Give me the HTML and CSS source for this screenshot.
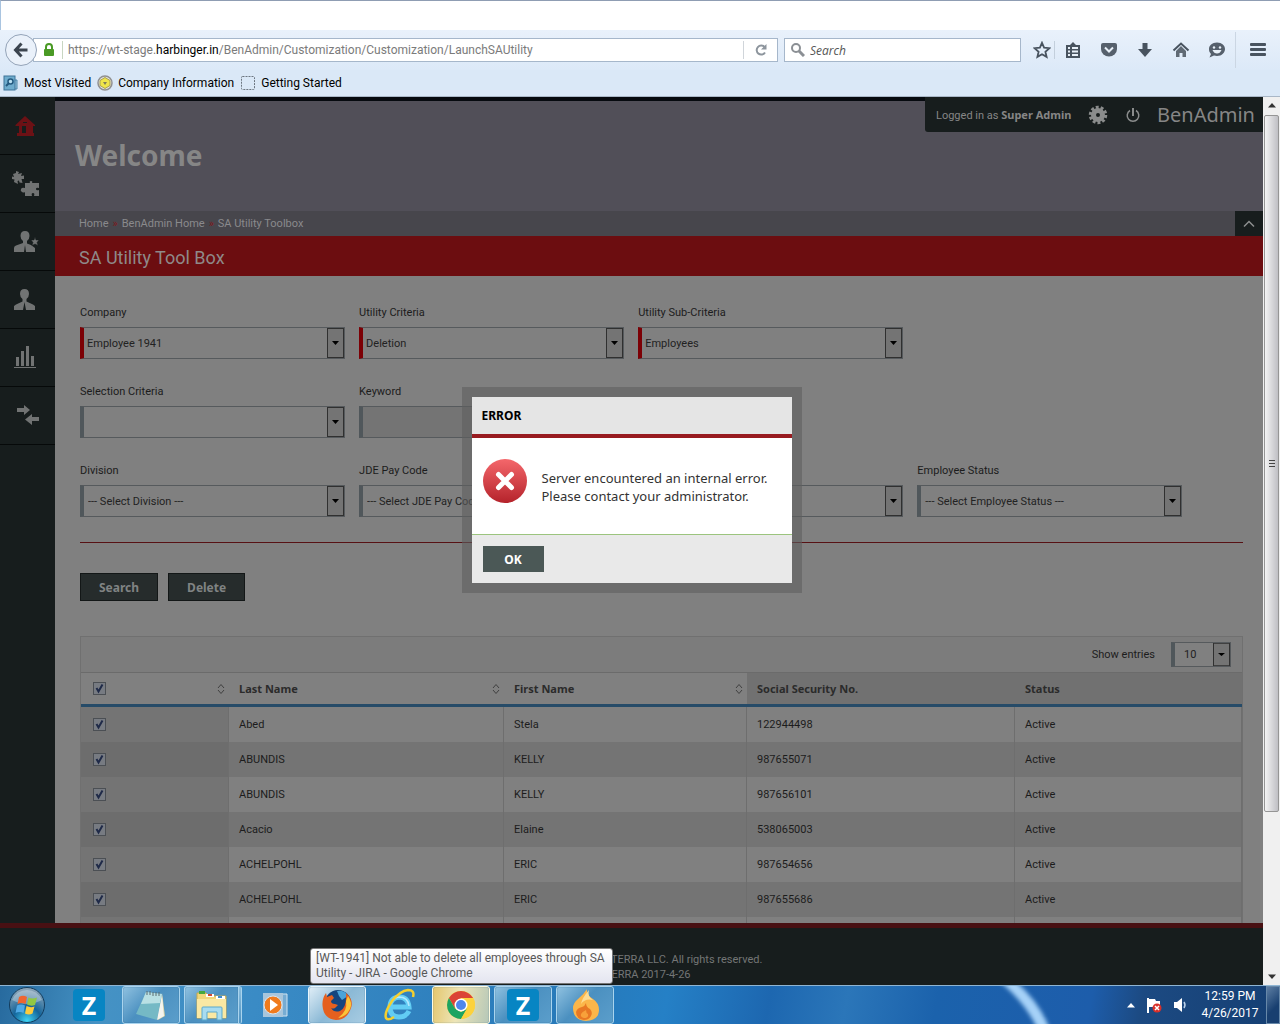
FILE: index.html
```html
<!DOCTYPE html>
<html lang="en">
<head>
    <meta charset="UTF-8">
    <meta name="viewport" content="width=device-width, initial-scale=1.0">
    <title>BenAdmin - SA Utility Tool Box</title>
    <link rel="stylesheet" href="styles.css">
</head>
<body>
    <!-- Browser chrome -->
    <div class="title-strip"></div>
    <div class="nav-bar">
        <button class="back-button" aria-label="Back">
            <svg width="16" height="16" viewBox="0 0 16 16" fill="none" stroke="#3c454f" stroke-width="3"><path d="M14.500 8H3M8.500 1.500L2.500 8l6 6.500"/></svg>
        </button>
        <div class="url-bar">
            <svg class="lock" width="12" height="14" viewBox="0 0 12 14"><path d="M3 7V4a3 3 0 0 1 6 0v3" fill="none" stroke="#4a9a25" stroke-width="2"/><rect x="1" y="6" width="10" height="7" rx="1" fill="#4a9a25"/></svg>
            <div class="url-text">https://wt-stage.<b>harbinger.in</b>/BenAdmin/Customization/Customization/LaunchSAUtility</div>
            <button class="reload" aria-label="Reload">
                <svg width="14" height="14" viewBox="0 0 14 14"><path d="M11 9.500a4.500 4.500 0 1 1-.5-5.500" fill="none" stroke="#8d959d" stroke-width="2"/><path d="M12.500 1v5.500H7z" fill="#8d959d"/></svg>
            </button>
        </div>
        <div class="search-bar">
            <svg width="14" height="14" viewBox="0 0 14 14" fill="none" stroke="#8b8f94"><circle cx="5" cy="5" r="4" stroke-width="2"/><path d="M8 8l5 5" stroke-width="3"/></svg>
            <input class="search-input" type="text" placeholder="Search" aria-label="Search the web">
        </div>
        <div class="nav-icons">
            <button class="star" aria-label="Bookmark this page"><svg width="18" height="18" viewBox="0 0 18 18" fill="none" stroke="#48535f" stroke-width="1.800"><path d="M9 1.800l2.100 4.900 5.300.5-4 3.500 1.200 5.200L9 13.200l-4.600 2.700 1.200-5.200-4-3.500 5.300-.5z"/></svg></button>
            <button aria-label="Bookmarks"><svg width="18" height="18" viewBox="0 0 18 18"><path d="M2 4h4l3-3 3 3h4v13H2z" fill="#48535f"/><path d="M4 6h2v2H4zM8 6h6v2H8zM4 9.500h2v2H4zM8 9.500h6v2H8zM4 13h2v2H4zM8 13h6v2H8z" fill="#e8f0f8"/></svg></button>
            <button aria-label="Pocket"><svg width="18" height="18" viewBox="0 0 18 18"><path d="M1 4q0-2 2-2h12q2 0 2 2v4a8 7.500 0 0 1-16 0z" fill="#56606c"/><path d="M5 6.500l4 4 4-4" fill="none" stroke="#e8f0f8" stroke-width="2"/></svg></button>
            <button aria-label="Downloads"><svg width="18" height="18" viewBox="0 0 18 18"><path d="M6.500 2h5v6H16l-7 8-7-8h4.500z" fill="#48535f"/></svg></button>
            <button aria-label="Home"><svg width="18" height="18" viewBox="0 0 18 18"><path d="M1.500 9.500L9 2.500l7.500 7" fill="none" stroke="#48535f" stroke-width="2"/><path d="M4 10l5-5 5 5v6h-3.500v-4h-3v4H4z" fill="#606a75"/></svg></button>
            <button aria-label="Hello"><svg width="18" height="18" viewBox="0 0 18 18"><path d="M9 1.500c5 0 8 3 8 6.500s-3 7-8 7c-1 0-2-.1-3-.4L1.500 16.500 3 13C1.500 11.500 1 10 1 8c0-3.500 3-6.500 8-6.500z" fill="#56606c"/><circle cx="6" cy="6.500" r="1.200" fill="#e8f0f8"/><circle cx="12" cy="6.500" r="1.200" fill="#e8f0f8"/><path d="M4.500 9h9q-1.500 3.500-4.500 3.500T4.500 9z" fill="#e8f0f8"/></svg></button>
            <button class="menu" aria-label="Open menu"><svg width="18" height="18" viewBox="0 0 18 18" fill="#48535f"><rect x="1" y="2" width="16" height="3" rx="1"/><rect x="1" y="7" width="16" height="3" rx="1"/><rect x="1" y="12" width="16" height="3" rx="1"/></svg></button>
        </div>
    </div>
    <div class="bookmark-bar">
        <a href="#"><svg width="16" height="16" viewBox="0 0 16 16"><path d="M12 5h2v9h-3" fill="#9cc8e0" stroke="#4d86a8"/><rect x="1" y="1" width="11" height="14" fill="#6eaccd" stroke="#3c7398"/><circle cx="7.500" cy="6.500" r="2.500" fill="#b9e0f2" stroke="#245a80" stroke-width="1.500"/><path d="M5.500 8.500L3 11" stroke="#245a80" stroke-width="2"/></svg>Most Visited</a>
        <a href="#"><svg width="16" height="16" viewBox="0 0 16 16"><circle cx="8" cy="8" r="7" fill="#e6e6e6" stroke="#909090" stroke-width="1.500"/><path d="M8 2.500l5 3v5l-5 3-5-3v-5z" fill="#efe54a" stroke="#aaa14e"/><path d="M6 7h4l-2 3z" fill="#7d7d5a"/></svg>Company Information</a>
        <a href="#"><svg width="16" height="16" viewBox="0 0 16 16"><rect x="1.500" y="1.500" width="13" height="13" rx="1" fill="none" stroke="#6c7680" stroke-dasharray="2 1"/></svg>Getting Started</a>
    </div>

    <div class="viewport">
        <div class="page">
            <div class="page-body">
                <!-- Left menu -->
                <nav class="sidebar">
                    <a href="#" aria-label="Home"><svg width="28" height="28" viewBox="0 0 28 28" fill="#6c1115"><path d="M3.500 13L13 4l10 9v1h-2v7h1v3H5v-3h2v-7H3.500zM10 14v7h4v-7zM11 11h4v-1h-4z" fill-rule="evenodd"/></svg></a>
                    <a href="#" aria-label="Modules"><svg width="28" height="28" viewBox="0 0 28 28" fill="#717373"><path d="M1 4l3-1V1l3 1-1 2 4-1-1 3 3-.5V9L9.500 9l1 4-3-.5-.5-2-1.500.5.5 3-4-2 .5-2.500L0 9V6.500l2 .5z"/><path d="M13 13h5q-1-2 1-2t1 2h7v5q-3-1-3 1t3 1v6h-5q1-3-1-3t-1 3h-7v-4q-1 1-3 0t-1-3 4-1z"/></svg></a>
                    <a href="#" aria-label="Admins"><svg width="28" height="28" viewBox="0 0 28 28" fill="#717373"><path d="M13 3q4.500 0 4.500 5 0 3-2.500 5v2.500l4 1.500 4 3v4H2v-4q0-2 2-2.500l7-2.500V13q-2.500-2-2.500-5 0-5 4.500-5z"/><path d="M13 17l1 7h-2z" fill="#171d1d"/><path d="M23 9l1 3h3l-2 2.500 1 3-3-1.500-3 1.500 1-3-2-2.500h3z" stroke="#171d1d" stroke-width=".5"/></svg></a>
                    <a href="#" aria-label="Employees"><svg width="28" height="28" viewBox="0 0 28 28" fill="#717373"><path d="M12.500 3Q17 3 17 8q0 3-2.500 5v2.500l6.500 3 2 1.500v4H2v-4l2-1.500 6.500-3V13Q8 11 8 8q0-5 4.500-5z"/><path d="M12.500 16l1.500 8h-3z" fill="#171d1d"/></svg></a>
                    <a href="#" aria-label="Reports"><svg width="28" height="28" viewBox="0 0 28 28" fill="#717373"><path d="M4 13h3v9H4zM9 7h3v15H9zM14 2h3v20h-3zM19 12h3v10h-3zM2 23h22v1H2z"/></svg></a>
                    <a href="#" aria-label="Transfers"><svg width="28" height="28" viewBox="0 0 28 28" fill="#717373"><path d="M5 6h7V3l6 5-6 5v-3H5zM27 15h-7v-3l-7 5.500 7 5.500v-4h7z"/></svg></a>
                </nav>

                <main class="main">
                    <header class="banner">
                        <h1>Welcome</h1>
                        <div class="user-box">
                            <span class="logged-in">Logged in as <b>Super Admin</b></span>
                            <svg width="20" height="20" viewBox="0 0 20 20"><circle cx="10" cy="10" r="4.500" fill="none" stroke="#8a8c8c" stroke-width="5"/><circle cx="10" cy="10" r="7.500" fill="none" stroke="#8a8c8c" stroke-width="3.500" stroke-dasharray="2.800 1.912"/></svg>
                            <svg width="16" height="16" viewBox="0 0 16 16" fill="none" stroke="#8a8c8c" stroke-width="1.500"><path d="M5 3.500a5.800 5.800 0 1 0 6 0"/><path d="M8 1v8" stroke-width="2"/></svg>
                            <span class="brand">BenAdmin</span>
                        </div>
                    </header>
                    <div class="crumbs">
                        <a href="#">Home</a><i>»</i><a href="#">BenAdmin Home</a><i>»</i><a href="#">SA Utility Toolbox</a>
                        <button class="collapse" aria-label="Collapse header"><svg width="12" height="8" viewBox="0 0 12 8" fill="none" stroke="#8c8e8e" stroke-width="1.500"><path d="M1 6.500l5-5 5 5"/></svg></button>
                    </div>
                    <h2 class="page-title">SA Utility Tool Box</h2>

                    <div class="content">
                        <div class="filters">
                            <div class="field required">
                                <label for="company">Company</label>
                                <select id="company"><option>Employee 1941</option></select>
                            </div>
                            <div class="field required">
                                <label for="criteria">Utility Criteria</label>
                                <select id="criteria"><option>Deletion</option></select>
                            </div>
                            <div class="field required">
                                <label for="subCriteria">Utility Sub-Criteria</label>
                                <select id="subCriteria"><option>Employees</option></select>
                            </div>
                            <div class="field row-start">
                                <label for="selection">Selection Criteria</label>
                                <select id="selection"><option></option></select>
                            </div>
                            <div class="field">
                                <label for="keyword">Keyword</label>
                                <input id="keyword" type="text" disabled>
                            </div>
                            <div class="field row-start">
                                <label for="division">Division</label>
                                <select id="division"><option>--- Select Division ---</option></select>
                            </div>
                            <div class="field">
                                <label for="payCode">JDE Pay Code</label>
                                <select id="payCode"><option>--- Select JDE Pay Code ---</option></select>
                            </div>
                            <div class="field unlabelled">
                                <select aria-label="Filter"><option></option></select>
                            </div>
                            <div class="field">
                                <label for="empStatus">Employee Status</label>
                                <select id="empStatus"><option>--- Select Employee Status ---</option></select>
                            </div>
                        </div>

                        <div class="actions">
                            <button>Search</button>
                            <button>Delete</button>
                        </div>

                        <div class="grid-box">
                            <div class="grid-tools">
                                <label for="entries">Show entries</label>
                                <select id="entries"><option>10</option></select>
                            </div>
                            <table>
                                <colgroup><col class="c-check"><col class="c-last"><col class="c-first"><col class="c-ssn"><col></colgroup>
                                <thead>
                                    <tr>
                                        <th class="sortable"><input type="checkbox" checked aria-label="Select all"></th>
                                        <th class="sortable">Last Name</th>
                                        <th class="sortable">First Name</th>
                                        <th class="plain">Social Security No.</th>
                                        <th class="plain">Status</th>
                                    </tr>
                                </thead>
                                <tbody>
                                    <tr><td><input type="checkbox" checked aria-label="Select row"></td><td>Abed</td><td>Stela</td><td>122944498</td><td>Active</td></tr>
                                    <tr><td><input type="checkbox" checked aria-label="Select row"></td><td>ABUNDIS</td><td>KELLY</td><td>987655071</td><td>Active</td></tr>
                                    <tr><td><input type="checkbox" checked aria-label="Select row"></td><td>ABUNDIS</td><td>KELLY</td><td>987656101</td><td>Active</td></tr>
                                    <tr><td><input type="checkbox" checked aria-label="Select row"></td><td>Acacio</td><td>Elaine</td><td>538065003</td><td>Active</td></tr>
                                    <tr><td><input type="checkbox" checked aria-label="Select row"></td><td>ACHELPOHL</td><td>ERIC</td><td>987654656</td><td>Active</td></tr>
                                    <tr><td><input type="checkbox" checked aria-label="Select row"></td><td>ACHELPOHL</td><td>ERIC</td><td>987655686</td><td>Active</td></tr>
                                    <tr><td></td><td></td><td></td><td></td><td></td></tr>
                                </tbody>
                            </table>
                        </div>
                    </div>
                </main>
            </div>
            <footer class="footer">
                <p>XTERRA LLC. All rights reserved.</p>
                <p>XTERRA 2017-4-26</p>
            </footer>

            <!-- Error dialog -->
            <div class="overlay">
                <div class="dialog" role="alertdialog" aria-labelledby="dialogTitle">
                    <h3 id="dialogTitle">ERROR</h3>
                    <div class="dialog-body">
                        <svg width="46" height="46" viewBox="0 0 46 46">
                            <defs><linearGradient id="red" x1="0" y1="0" x2="0" y2="1"><stop offset="0" stop-color="#f4676b"/><stop offset="1" stop-color="#b5232b"/></linearGradient></defs>
                            <circle cx="23" cy="23" r="22" fill="url(#red)"/>
                            <path d="M16.500 16.500l13 13M29.500 16.500l-13 13" stroke="#fff" stroke-width="5" stroke-linecap="round"/>
                        </svg>
                        <p>Server encountered an internal error.<br>Please contact your administrator.</p>
                    </div>
                    <div class="dialog-foot"><button>OK</button></div>
                </div>
            </div>
        </div>

        <div class="scrollbar">
            <svg width="8" height="5" viewBox="0 0 8 5"><path d="M4 0l4 4.500H0z" fill="#333"/></svg>
            <div class="thumb"><span></span><span></span><span></span></div>
            <svg width="8" height="5" viewBox="0 0 8 5"><path d="M4 5l4-4.500H0z" fill="#333"/></svg>
        </div>
    </div>

    <!-- Windows taskbar -->
    <div class="taskbar">
        <svg class="glow" width="180" height="38" viewBox="0 0 180 38">
            <defs><filter id="soft"><feGaussianBlur stdDeviation="2"/></filter></defs>
            <path d="M88-6h16q26 22 36 50h-12Q116 17 88-6z" fill="#a6d2f8" filter="url(#soft)"/>
        </svg>
        <button class="start" aria-label="Start">
            <svg width="38" height="38" viewBox="0 0 38 38">
                <defs><radialGradient id="orb" cx=".5" cy=".95" r=".9"><stop offset="0" stop-color="#3fd5f5"/><stop offset=".45" stop-color="#14659b"/><stop offset="1" stop-color="#8aa4b8"/></radialGradient></defs>
                <circle cx="19" cy="19" r="17.500" fill="url(#orb)" stroke="#123c5d"/>
                <path d="M4 14Q9 4 19 4t15 10q-8 4-15 4T4 14z" fill="#fff" opacity=".3"/>
                <path d="M11 11q4-2.500 8 0l-1.500 7q-4-2-8 0z" fill="#ef6530"/><path d="M20.500 11.500q4 2 8.500 0l-2 7.500q-4 1.500-8-.5z" fill="#91c843"/><path d="M9 19.500q4-2 8 0L15.500 27q-4-2-8 0z" fill="#4fa9e6"/><path d="M18.500 20q4 2 8 .5l-2 7q-3.500 2-7.500 0z" fill="#fbcb3d"/>
            </svg>
        </button>
        <button class="task" aria-label="Zoho"><span class="z-icon">Z</span></button>
        <button class="task open" aria-label="Notepad">
            <svg width="34" height="34" viewBox="0 0 34 34"><path d="M28 5l3 23-7 4z" fill="#d8cf9f"/><path d="M12 4l16 2-5 26L2 26z" fill="#75b9c5"/><path d="M12 4l16 2-2 9L7 16z" fill="#b9e0e4"/><path d="M23 32L28 7l2 21z" fill="#f4f4ee"/><path d="M13 3v4M16 3v4M19 4v4M22 4v4M25 4v4" stroke="#596b70"/></svg>
        </button>
        <button class="task open stacked" aria-label="Explorer">
            <svg width="34" height="34" viewBox="0 0 34 34"><path d="M2 5h9l2 3h18v22H2z" fill="#f1d77b" stroke="#c9a94d"/><path d="M4 3h6v3H4z" fill="#46a83e"/><path d="M11 6h8v3h-8z" fill="#fff"/><path d="M13 6h4v2h-4z" fill="#d24a34"/><path d="M21 8h9v3h-9z" fill="#fff"/><path d="M23 8h4v2h-4z" fill="#3d8dcc"/><path d="M2 11h29v19H2z" fill="#fae8a3"/><path d="M7 32V20q0-1 1-1h18q1 0 1 1v12h-5v-8H12v8z" fill="#a8dcf0" stroke="#5ba9cc"/></svg>
        </button>
        <button class="task" aria-label="Media Player">
            <svg width="34" height="34" viewBox="0 0 34 34"><path d="M24 6h5v22h-5z" fill="#76acd3" stroke="#cfe4f2"/><path d="M5 5h20v24H5z" fill="#a8c6dc"/><circle cx="15" cy="17" r="9" fill="#f07b1d" stroke="#d9e5ee"/><path d="M12 11l8 6-8 6z" fill="#fff"/></svg>
        </button>
        <button class="task open bright" aria-label="Firefox">
            <svg width="34" height="34" viewBox="0 0 34 34"><circle cx="18" cy="15" r="13" fill="#15457f"/><path d="M17 3q8-1 11 5l-6 4-3-4z" fill="#4ba3d9"/><path d="M26 5q8 7 5 15-4 12-15 12Q5 31 3 21 1 12 6 5l1 4 5-2 2 3-3 3q0 3 4 3l3 1-3 3q-2 1-4 0 3 5 9 3 7-3 6-18z" fill="#e5601f"/><path d="M28 8q5 7 2 13-4 8-12 9 10-7 8-17z" fill="#fbc438"/></svg>
        </button>
        <button class="task" aria-label="Internet Explorer">
            <svg width="36" height="36" viewBox="0 0 36 36" fill="none"><path d="M28 24q-3 6-10 6-9 0-9-10 0-9 9-10 9 0 10 10H11" stroke="#62cdf4" stroke-width="5"/><path d="M28 19q-1-9-10-9-7 1-8 7" stroke="#b3eaff" stroke-width="1.500"/><path d="M32 10q2-7-5-7-8 1-16 11-8 12-6 17 2 3 8-1" stroke="#f4cf2f" stroke-width="2.500"/></svg>
        </button>
        <button class="task open chrome" aria-label="Chrome">
            <svg width="32" height="32" viewBox="0 0 32 32"><circle cx="16" cy="16" r="14" fill="#fcd23d"/><path d="M16 9h12.100A14 14 0 0 0 3.900 9L10 19.500z" fill="#db4437"/><path d="M3.900 9A14 14 0 0 0 16 30l6-10.500-6 3.500-6-3.500z" fill="#1da462"/><path d="M16 30l6.100-10.500L23 16V9h5.100A14 14 0 0 1 16 30z" fill="#fcd23d"/><circle cx="16" cy="16" r="6.500" fill="#fff"/><circle cx="16" cy="16" r="5" fill="#4f86ec"/></svg>
        </button>
        <button class="task open" aria-label="Zoho window"><span class="z-icon">Z</span></button>
        <button class="task open" aria-label="Burn">
            <svg width="32" height="34" viewBox="0 0 32 34"><path d="M18 1q-1 6 6 10 6 4 6 11 0 10-13 11Q4 32 4 20q0-5 5-9Q15 6 18 1z" fill="#fbb64a"/><path d="M20 2q-2 6 4 10-8-2-12 4 1-6 8-14z" fill="#fddc93"/><path d="M17 15q0 4 4 6 3 3 1 7-2 4-7 4-8-1-8-8 1-4 6-5 3-1 4-4z" fill="#e87824"/><path d="M17 22q0 3 2 4 1 4-4 4-4-1-3-4 1-2 5-4z" fill="#f8a13a"/></svg>
        </button>
        <div class="tray">
            <svg width="8" height="5" viewBox="0 0 8 5"><path d="M4 0l4 4.500H0z" fill="#fff"/></svg>
            <svg width="16" height="18" viewBox="0 0 16 18"><path d="M2 2v15" stroke="#fff" stroke-width="2"/><path d="M3 3h6l1 2h4v6H3z" fill="#fff"/><circle cx="11" cy="12" r="4.500" fill="#d8302a"/><path d="M9 10l4 4M13 10l-4 4" stroke="#fff" stroke-width="1.500"/></svg>
            <svg width="14" height="16" viewBox="0 0 14 16"><path d="M1 5h3l5-4v14l-5-4H1z" fill="#fff"/><path d="M11 5q2 3 0 6" fill="none" stroke="#bcd3ec" stroke-width="1.500"/></svg>
            <div class="clock">12:59 PM<br>4/26/2017</div>
        </div>
        <button class="show-desktop" aria-label="Show desktop"></button>
    </div>
    <div class="task-tip">[WT-1941] Not able to delete all employees through SA Utility - JIRA - Google Chrome</div>
</body>
</html>
```
FILE: styles.css
```css
* {
    margin: 0;
    padding: 0;
    box-sizing: border-box;
}

body {
    font-family: Roboto, sans-serif;
    font-size: 12px;
    height: 100vh;
    overflow: hidden;
    display: flex;
    flex-direction: column;
    background: #dae8f7;
    position: relative;
}

a {
    color: inherit;
    text-decoration: none;
}

button {
    border: none;
    background: none;
    font-family: 'Noto Sans', sans-serif;
}

h1,
h3,
th {
    font-family: 'Noto Sans', sans-serif;
}

svg {
    display: block;
    flex: none;
}

/* Browser chrome */
.title-strip {
    height: 30px;
    background: #fff;
    border-top: 1px solid #8f9db3;
    border-left: 1px solid #a9c4e0;
}

.nav-bar {
    height: 40px;
    display: flex;
    align-items: center;
    padding-left: 5px;
    background: linear-gradient(#e9f1fb, #dce9f8);
}

.back-button {
    width: 32px;
    height: 32px;
    border: 1px solid #94a3b8;
    border-radius: 50%;
    background: #eaf1fa;
    display: flex;
    align-items: center;
    justify-content: center;
    z-index: 1;
}

.url-bar {
    flex: 1;
    height: 24px;
    margin-left: -4px;
    display: flex;
    align-items: center;
    background: #fff;
    border: 1px solid #a6b7cb;
}

.lock {
    margin: 0 7px 0 9px;
}

.url-text {
    flex: 1;
    border-left: 1px solid #c8d6c2;
    padding-left: 5px;
    line-height: 18px;
    color: #7b7b7b;
    white-space: nowrap;
    overflow: hidden;
}

.url-text b {
    font-weight: 400;
    color: #000;
}

.reload {
    width: 34px;
    height: 18px;
    border-left: 1px solid #d0d5da;
    display: flex;
    align-items: center;
    justify-content: center;
}

.search-bar {
    width: 237px;
    height: 24px;
    margin-left: 6px;
    padding-left: 6px;
    display: flex;
    align-items: center;
    gap: 5px;
    background: #fff;
    border: 1px solid #a6b7cb;
}

.search-input {
    flex: 1;
    min-width: 0;
    border: none;
    font: italic 12px 'Open Sans', sans-serif;
}

.search-input::placeholder {
    color: #555;
}

.nav-icons {
    width: 259px;
    height: 100%;
    padding-left: 12px;
    display: flex;
    align-items: center;
}

.nav-icons button {
    width: 36px;
    height: 18px;
    display: flex;
    align-items: center;
    justify-content: center;
}

.nav-icons .star {
    width: 22px;
    justify-content: flex-start;
    border-right: 1px solid #c3cfdc;
}

.nav-icons .menu {
    flex: 1;
    height: 36px;
    border-left: 1px solid #cbd6e3;
}

.bookmark-bar {
    height: 27px;
    padding-left: 3px;
    display: flex;
    align-items: center;
    gap: 6px;
    border-bottom: 1px solid #a9b7c7;
}

.bookmark-bar a {
    display: flex;
    align-items: center;
    gap: 5px;
}

/* Web page */
.viewport {
    flex: 1;
    min-height: 0;
    display: flex;
}

.page {
    flex: 1;
    min-width: 0;
    display: flex;
    flex-direction: column;
    position: relative;
    font-size: 11px;
    background: #808080;
}

.page-body {
    flex: 1;
    min-height: 0;
    display: flex;
    overflow: hidden;
}

.sidebar {
    width: 55px;
    background: #171d1d;
}

.sidebar a {
    height: 58px;
    padding-left: 12px;
    display: flex;
    align-items: center;
    border-bottom: 1px solid #060909;
}

.main {
    flex: 1;
    min-width: 0;
}

.banner {
    height: 114px;
    padding: 38px 20px 0;
    border-top: 4px solid #060a0f;
    background: #514f58;
    color: #868686;
    position: relative;
}

.banner h1 {
    font-size: 28px;
    line-height: 32px;
}

.user-box {
    position: absolute;
    top: -4px;
    right: 0;
    width: 338px;
    height: 35px;
    padding: 0 8px 0 11px;
    display: flex;
    align-items: center;
    justify-content: space-between;
    background: #171d1d;
    border-bottom-left-radius: 3px;
}

.logged-in b {
    font-family: 'Noto Sans', sans-serif;
}

.brand {
    font-family: 'Noto Sans', sans-serif;
    font-size: 20px;
}

.crumbs {
    height: 25px;
    padding-left: 24px;
    display: flex;
    align-items: center;
    background: #47464c;
    color: #8a8a8c;
}

.crumbs i {
    font-style: normal;
    color: #7c1a20;
    margin: 0 4px;
}

.collapse {
    width: 28px;
    height: 25px;
    margin-left: auto;
    display: flex;
    align-items: center;
    justify-content: center;
    background: #171d1d;
}

.page-title {
    height: 40px;
    padding: 3px 24px 0;
    line-height: 38px;
    font-size: 18px;
    font-weight: 400;
    background: #6c0d10;
    color: #8f8989;
}

.content {
    padding: 29px 20px 0 25px;
    color: #1c1c1c;
}

.filters {
    display: grid;
    grid-template-columns: repeat(4, 24%);
    row-gap: 25px;
    padding-bottom: 25px;
    border-bottom: 1px solid #571114;
}

.row-start {
    grid-column-start: 1;
}

.field {
    width: 95%;
}

.field label {
    display: block;
    line-height: 16px;
    margin-bottom: 6px;
}

.unlabelled {
    align-self: end;
}

select,
.field input {
    appearance: none;
    display: block;
    width: 100%;
    height: 32px;
    padding-left: 4px;
    border: 1px solid #565a5d;
    border-left: 4px solid #50575b;
    border-radius: 0;
    font: 11px Roboto, sans-serif;
    color: #222;
    background: #808080;
}

select {
    background: #808080 url("data:image/svg+xml,%3Csvg xmlns='http://www.w3.org/2000/svg' viewBox='0 0 17 30' preserveAspectRatio='none'%3E%3Crect x='.5' y='.5' width='16' height='29' fill='%23747474' stroke='%23303030'/%3E%3Cpath d='M5 13h7l-3.500 4z' fill='%23000'/%3E%3C/svg%3E") no-repeat right / 17px 30px;
}

.required select {
    border-left-color: #7c0005;
    padding-left: 3px;
}

.field input {
    background: #747474;
}

.actions {
    display: flex;
    gap: 10px;
    padding: 30px 0 35px;
}

.actions button {
    height: 28px;
    padding: 0 18px;
    border: 1px solid #131717;
    background: #262c2c;
    color: #808383;
    font-size: 12px;
    font-weight: 700;
}

.grid-box {
    border: 1px solid #707070;
}

.grid-tools {
    height: 36px;
    padding-right: 11px;
    display: flex;
    align-items: center;
    justify-content: flex-end;
    gap: 16px;
    background: #7c7c7c;
    border-bottom: 1px solid #6b6b6b;
}

.grid-tools select {
    width: 60px;
    height: 25px;
    padding-left: 9px;
    background-size: 17px 23px;
}

table {
    width: 100%;
    table-layout: fixed;
    border-collapse: separate;
    border-spacing: 0;
}

.c-check {
    width: 148px;
}

.c-last {
    width: 275px;
}

.c-first {
    width: 243px;
}

.c-ssn {
    width: 268px;
}

th,
td {
    padding: 0 10px;
    text-align: left;
}

th {
    height: 34px;
    border-bottom: 3px solid #264b68;
    color: #2b2b2b;
}

th.sortable {
    background: url("data:image/svg+xml,%3Csvg xmlns='http://www.w3.org/2000/svg' viewBox='0 0 8 12' fill='none' stroke='%23404040'%3E%3Cpath d='M1 5l3-3.500L7 5M1 7l3 3.500L7 7'/%3E%3C/svg%3E") no-repeat right 4px center / 8px 12px;
}

th.plain {
    background: #717171;
}

td {
    height: 35px;
    border-right: 1px solid #6e6e6e;
}

tbody tr:nth-child(even) {
    background: #747474;
}

td:first-child {
    background: #747474;
}

tr:nth-child(even) td:first-child {
    background: #6d6d6d;
}

th:first-child,
td:first-child {
    padding-left: 12px;
}

table input {
    appearance: none;
    display: block;
    width: 13px;
    height: 13px;
    border: 1px solid #4b4f54;
    background: #777b82 url("data:image/svg+xml,%3Csvg xmlns='http://www.w3.org/2000/svg' viewBox='0 0 11 11' fill='none' stroke='%231f2a48' stroke-width='2'%3E%3Cpath d='M2.500 5l2 3.500L8.500 1.500'/%3E%3C/svg%3E");
}

.footer {
    height: 62px;
    padding-top: 24px;
    border-top: 5px solid #481013;
    background: #171d1d;
    color: #747676;
    line-height: 15px;
}

.footer p {
    padding-left: 604px;
}

.footer p + p {
    padding-left: 598px;
}

/* Error dialog */
.overlay {
    position: absolute;
    top: 290px;
    left: 0;
    right: 0;
    display: flex;
    justify-content: center;
}

.dialog {
    width: 340px;
    border: 10px solid rgba(95, 95, 95, 0.6);
    background: #fff;
    background-clip: padding-box;
}

.dialog h3 {
    height: 41px;
    padding: 0 10px;
    line-height: 38px;
    font-size: 12px;
    background: #e5e5e5;
    border-bottom: 4px solid #981b20;
}

.dialog-body {
    height: 96px;
    padding: 20px 10px;
    display: flex;
    gap: 14px;
    font-family: 'Noto Sans', sans-serif;
    font-size: 13px;
    line-height: 18px;
    color: #333;
    white-space: nowrap;
}

.dialog-body p {
    padding-top: 11px;
}

.dialog-foot {
    height: 49px;
    padding: 11px;
    border-top: 1px solid #9cc47e;
    background: #e9e9e9;
}

.dialog-foot button {
    width: 61px;
    height: 26px;
    background: #4b5856;
    color: #fff;
    font-size: 12px;
    font-weight: 700;
}

/* Page scrollbar */
.scrollbar {
    width: 17px;
    padding: 6px 0;
    display: flex;
    flex-direction: column;
    align-items: center;
    background: #f0f0f0;
}

.thumb {
    width: 15px;
    height: 697px;
    margin: 7px 0 auto;
    display: flex;
    flex-direction: column;
    align-items: center;
    justify-content: center;
    gap: 2px;
    border: 1px solid #959595;
    border-radius: 2px;
    background: linear-gradient(90deg, #f4f4f4, #d9d9dc 50%, #bfbfc4);
}

.thumb span {
    width: 6px;
    height: 1px;
    background: #444;
}

/* Taskbar */
.taskbar {
    height: 39px;
    display: flex;
    align-items: center;
    gap: 4px;
    position: relative;
    border-top: 1px solid #8fb5d3;
    background: linear-gradient(100deg, #276a9e 0, #4592c4 8%, #3a8bc5 20%, #2779b9 45%, #2580c6 52%, #1d67b0 60%, #2b76b9 66%, #1b62ac 73%, #1d5dab 85%, #1c4a82 89%, #153f73 100%);
}

.glow {
    position: absolute;
    right: 190px;
    top: 0;
}

.start {
    width: 54px;
    margin-right: 2px;
    display: flex;
    justify-content: center;
}

.task {
    width: 58px;
    height: 38px;
    display: flex;
    align-items: center;
    justify-content: center;
}

.open {
    border: 1px solid #a9d4ee;
    border-radius: 3px;
    box-shadow: inset 0 0 1px #1b4a70;
    background: linear-gradient(135deg, #8fc1e0, #4b90c0 45%, #5b9ecb);
}

.bright {
    border-color: #e8f6fd;
    background: linear-gradient(135deg, #e0eef7, #8bb9d6 50%, #a8cce2);
}

.chrome {
    border-color: #fffbe2;
    background: linear-gradient(100deg, #e4c66d, #ede5b7 45%, #b5c7b8);
}

.stacked {
    border-right: 4px double #a9d4ee;
}

.z-icon {
    width: 32px;
    height: 32px;
    border-radius: 4px;
    background: #0785c3;
    color: #fff;
    font-size: 25px;
    line-height: 32px;
    font-weight: 700;
}

.tray {
    margin-left: auto;
    display: flex;
    align-items: center;
    gap: 11px;
    color: #fff;
}

.clock {
    width: 64px;
    text-align: center;
    line-height: 17px;
}

.show-desktop {
    width: 14px;
    height: 38px;
    border: 1px solid #6788a9;
    background: linear-gradient(135deg, #5d7ea3, #183f70 60%);
}

.task-tip {
    position: absolute;
    left: 310px;
    bottom: 40px;
    width: 303px;
    padding: 2px 5px;
    border: 1px solid #767676;
    border-radius: 3px;
    background: linear-gradient(#fff, #e4e5f0);
    color: #575757;
    line-height: 15px;
}
```
